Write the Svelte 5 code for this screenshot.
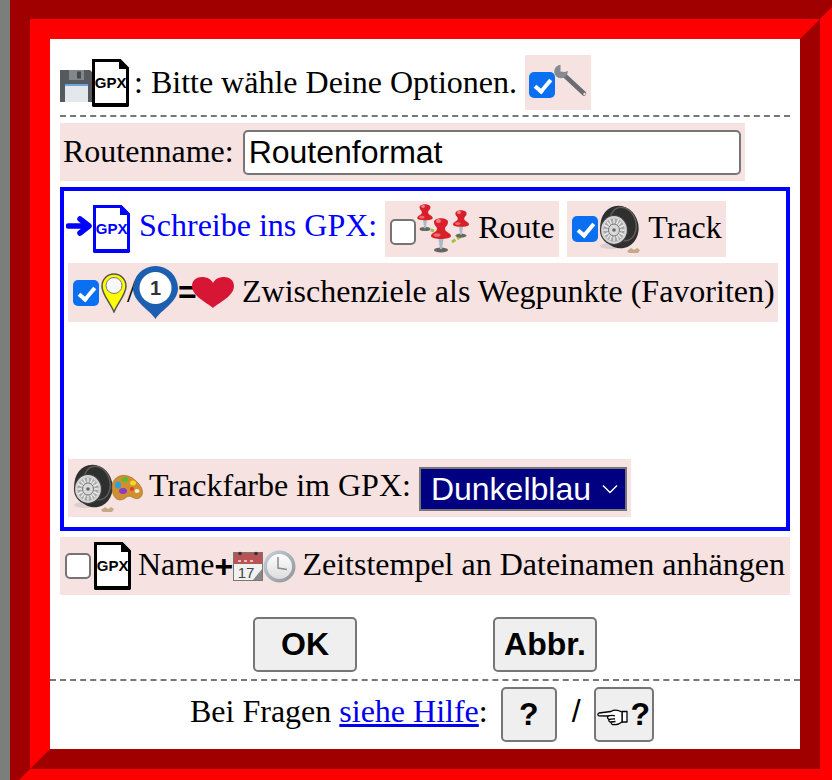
<script>
  const colours = ['Schwarz', 'Dunkelblau', 'Rot', 'Grün'];
  let routeName = $state('Routenformat');
  let wantRoute = $state(false);
  let wantTrack = $state(true);
  let wantWaypoints = $state(true);
  let expert = $state(true);
  let addStamp = $state(false);
  let trackColour = $state('Dunkelblau');
</script>

{#snippet gpxDoc(colour)}
  <svg class="doc" width="37" height="48" viewBox="0 0 37 48">
    <path d="M1.5 1.5H28L35.5 9V46H1.5Z" fill="#fff" stroke={colour} stroke-width="3" />
    <path d="M1 44H36V48H1Z" fill={colour} />
    <path d="M27 1 36 10H27Z" fill={colour} />
    <text x="18.7" y="29" text-anchor="middle" class="doc-text" fill={colour}>GPX</text>
  </svg>
{/snippet}

{#snippet wheel()}
  <svg class="wheel" width="42" height="48" viewBox="0 0 42 48">
    <ellipse cx="13" cy="41" rx="11" ry="3" fill="#bbb" opacity="0.5" />
    <ellipse cx="21.500" cy="22" rx="19" ry="21.500" transform="rotate(-14 21.500 22)" fill="#2f2f2f" />
    <ellipse cx="25" cy="19" rx="13" ry="17" transform="rotate(-14 25 19)" fill="none" stroke="#5d5d5d" stroke-width="1.500" />
    <ellipse cx="16" cy="25" rx="13.500" ry="14.500" fill="#d4d4d4" stroke="#3d3d3d" stroke-width="1.200" />
    <ellipse cx="16" cy="25" rx="10.500" ry="11.500" fill="#a8a8a8" />
    <g stroke="#ececec" stroke-width="1.400">
      <path d="M16 14V36M5.500 25H26.500M9 17 23 33M23 17 9 33M11.500 14.500 20.500 35.500M20.500 14.500 11.500 35.500M6 20 26 30M26 20 6 30" />
    </g>
    <ellipse cx="16" cy="25" rx="5.500" ry="6" fill="#d9d9d9" stroke="#777" />
    <circle cx="16" cy="25" r="1.800" fill="#666" />
    <path d="M29 46 33 43 36 45 39 43 42 45 40 48H31Z" fill="#b0935f" opacity="0.7" />
  </svg>
{/snippet}

{#snippet pin(x, y, s)}
  <g transform="translate({x} {y}) scale({s})">
    <ellipse cx="0" cy="32" rx="7" ry="2.600" fill="#666" />
    <path d="M-2.500 21h5l-1.500 10h-2z" fill="#a9bcc6" />
    <path d="M-7 4C-7-1 7-1 7 4 7 8 4 8 4 11 4 14 10 15 10 18 10 22-10 22-10 18-10 15-4 14-4 11-4 8-7 8-7 4Z" fill="#d8202c" />
    <ellipse cx="-2.500" cy="3" rx="2.500" ry="2" fill="#f27d7d" />
    <ellipse cx="-4" cy="17" rx="3.500" ry="1.800" fill="#ef6a6a" />
  </g>
{/snippet}

<div class="screen">
  <div class="dialog">
    <div class="dialog-inner">
      <div class="head">
        <svg class="floppy" width="32" height="32" viewBox="0 0 32 32">
          <path d="M0 0H30L32 2V32H0Z" fill="#555a5e" />
          <rect x="9" y="0" width="15" height="10" fill="#83878a" />
          <rect x="17" y="1.500" width="4" height="7" fill="#45494c" />
          <rect x="5" y="14" width="23" height="18" fill="#e3e8ec" />
          <rect x="5" y="14" width="23" height="2" fill="#6da4dc" />
        </svg>
        {@render gpxDoc('#000')}
        <span class="label colon">: Bitte wähle Deine Optionen.</span>
        <label class="chip expert">
          <input type="checkbox" bind:checked={expert} />
          <svg width="36" height="36" viewBox="0 0 36 36">
            <path d="M9 11 30 30.500" stroke="#696d71" stroke-width="4.500" stroke-linecap="round" />
            <circle cx="7" cy="8.500" r="6.800" fill="#858a8e" />
            <path d="M6.500 8.500 6.500 0 16 0 16 7 11 9Z" fill="#f7e2e2" />
            <circle cx="30.500" cy="31" r="1.200" fill="#f7e2e2" />
          </svg>
        </label>
      </div>
      <div class="rule"></div>

      <div class="chip name-row">
        <label class="label" for="route-name">Routenname:</label>
        <input id="route-name" class="name-input" bind:value={routeName} />
      </div>

      <div class="write-box">
        <div class="line">
          <svg class="arrow" width="27" height="22" viewBox="0 0 27 22">
            <path d="M2.500 11H21M14 4 23 11 14 18" fill="none" stroke="#00f" stroke-width="5.500" stroke-linecap="round" stroke-linejoin="round" />
          </svg>
          {@render gpxDoc('#00f')}
          <span class="label blue">Schreibe ins GPX:</span>
          <label class="chip route">
            <input type="checkbox" bind:checked={wantRoute} />
            <svg class="pins" width="56" height="50" viewBox="0 0 56 50">
              <path d="M9 24 18 27M36 38 47 31" stroke="#9bc43a" stroke-width="3" stroke-dasharray="4 2" />
              {@render pin(9, 0, 0.78)}
              {@render pin(45, 6, 0.8)}
              {@render pin(25, 14, 1)}
            </svg>
            <span class="label word">Route</span>
          </label>
          <label class="chip track">
            <input type="checkbox" bind:checked={wantTrack} />
            {@render wheel()}
            <span class="label word">Track</span>
          </label>
        </div>

        <label class="chip waypoints">
          <input type="checkbox" bind:checked={wantWaypoints} />
          <svg class="yellow-pin" width="26" height="40" viewBox="0 0 26 40">
            <path d="M13 39C9 29 1 22 1 13A12 12 0 0 1 25 13C25 22 17 29 13 39Z" fill="#ff0" stroke="#555" stroke-width="1.500" />
            <circle cx="13" cy="12.500" r="8" fill="#f7f7f7" stroke="#777" />
          </svg>
          <span class="label slash">/</span>
          <svg width="45" height="53" viewBox="0 0 45 53">
            <path d="M22.500 53C17 44 0 36 0 22.500A22.500 22.500 0 0 1 45 22.500C45 36 28 44 22.500 53Z" fill="#1c5fb0" />
            <circle cx="22.500" cy="22" r="16" fill="#fff" />
            <text x="22.500" y="29" text-anchor="middle" class="pin-text">1</text>
          </svg>
          <span class="sign">=</span>
          <svg width="42" height="32" viewBox="0 0 42 32">
            <path d="M21 31C14 25 0 19 0 9 0 3 5 0 10 0 15 0 19 2 21 6 23 2 27 0 32 0 37 0 42 3 42 9 42 19 28 25 21 31Z" fill="#d71635" />
          </svg>
          <span class="label word">Zwischenziele als Wegpunkte (Favoriten)</span>
        </label>

        <div class="chip colour-row">
          {@render wheel()}
          <svg class="palette" width="32" height="28" viewBox="0 0 32 28">
            <path d="M2 8C6 0 16-1 24 6 30 11 33 17 31 21 29 26 24 25 21 23 17 21 15 24 13 25 9 27 5 26 3 22 1 18 0 13 2 8Z" fill="#d0902f" stroke="#8e5f1e" stroke-width="0.500" />
            <ellipse cx="7" cy="11" rx="3" ry="3.500" fill="#2c9fe0" />
            <ellipse cx="14" cy="5.500" rx="3" ry="2.500" fill="#4fbf3a" />
            <ellipse cx="22" cy="9" rx="3" ry="2.500" fill="#f0d92a" />
            <ellipse cx="12" cy="17" rx="4" ry="3" fill="#8a3bc8" />
            <ellipse cx="26" cy="17" rx="2.500" ry="2" fill="#f6e9d6" />
            <ellipse cx="21" cy="15" rx="2" ry="2" fill="#e23b3b" />
          </svg>
          <label class="label word" for="track-colour">Trackfarbe im GPX:</label>
          <select id="track-colour" class="colour-select" bind:value={trackColour}>
            {#each colours as c}
              <option value={c}>{c}</option>
            {/each}
          </select>
        </div>
      </div>

      <label class="chip stamp">
        <input type="checkbox" bind:checked={addStamp} />
        {@render gpxDoc('#000')}
        <span class="label word">Name</span>
        <span class="sign">+</span>
        <svg width="30" height="30" viewBox="0 0 30 30">
          <rect x="0.500" y="1.500" width="29" height="28" fill="#f1f1f1" stroke="#777" />
          <rect x="1" y="2" width="28" height="11" fill="#b95454" />
          <circle cx="7" cy="2.500" r="1.800" fill="#333" />
          <circle cx="23" cy="2.500" r="1.800" fill="#333" />
          <path d="M5 10h3M11 10h3M17 10h3" stroke="#e8bcbc" stroke-width="2" />
          <text x="13" y="27" text-anchor="middle" class="cal-text">17</text>
          <path d="M29 18 20 29H29Z" fill="#888" />
        </svg>
        <svg width="33" height="33" viewBox="0 0 33 33">
          <defs>
            <linearGradient id="clock" x1="0" y1="0" x2="1" y2="1">
              <stop offset="0" stop-color="#c6d3de" />
              <stop offset="1" stop-color="#8f9296" />
            </linearGradient>
            <linearGradient id="clock-face" x1="0" y1="0" x2="0" y2="1">
              <stop offset="0" stop-color="#fff" />
              <stop offset="1" stop-color="#dcdcdc" />
            </linearGradient>
          </defs>
          <circle cx="16.500" cy="16.500" r="16" fill="url(#clock)" />
          <circle cx="16.500" cy="16.500" r="12.500" fill="url(#clock-face)" />
          <path d="M15 7V18L24 19.500" fill="none" stroke="#8a8a8a" stroke-width="1.500" />
        </svg>
        <span class="label word">Zeitstempel an Dateinamen anhängen</span>
      </label>

      <div class="actions">
        <button class="btn wide">OK</button>
        <button class="btn wide">Abbr.</button>
      </div>
      <div class="rule full"></div>

      <div class="help">
        <span class="label help-text">Bei Fragen <a href="#hilfe">siehe Hilfe</a>:</span>
        <button class="btn small">?</button>
        <span class="help-slash">/</span>
        <button class="btn small hand">
          <svg class="hand-icon" width="31" height="17" viewBox="0 0 31 17">
            <g fill="#fff" stroke="#000" stroke-width="1.300" stroke-linejoin="round">
              <path d="M25 2.500H30V13H25Z" />
              <path d="M25 3C21 1 17 0.500 14 2.500L2 4C0.500 4.500 0.500 6.500 2 6.800L11 7C10 9 11 10 12 10.500 11.500 12 12.500 13 14 13 14 15 15.500 16 17.500 15.500 20 16 23 14.500 25 13Z" />
              <path d="M11 7C13 6.500 16 6 18 7M12 10.500C14 10 16 9.500 18 10M14 13C15.500 13 17 12.500 18.500 12.500" fill="none" />
            </g>
          </svg>?
        </button>
      </div>
    </div>
  </div>
</div>

<style>
  :global(body) {
    background: #7b7f7a;
  }

  .screen {
    width: 832px;
    height: 780px;
    overflow: hidden;
    padding-left: 10px;
    box-sizing: border-box;
    background: #7b7f7a;
    display: flow-root;
  }

  .dialog {
    width: 830px;
    height: 790px;
    margin-top: -1px;
    box-sizing: border-box;
    border: 20px solid;
    border-color: #a00000 #ff0000 #ff0000 #a00000;
  }

  .dialog-inner {
    height: 100%;
    box-sizing: border-box;
    border: 20px solid;
    border-color: #ff0000 #a00000 #a00000 #ff0000;
    background: #fff;
    padding-top: 16px;
    font-family: 'Liberation Serif', serif;
    color: #000;
  }

  .label {
    font-size: 32px;
    line-height: 37px;
    margin-bottom: 3px;
    white-space: nowrap;
    font-family: 'Liberation Serif', serif;
  }

  .chip {
    background: #f7e2e2;
    display: flex;
    align-items: center;
  }

  .doc-text {
    font: bold 15px 'Liberation Sans', sans-serif;
  }

  .pin-text {
    font: bold 20px 'Liberation Sans', sans-serif;
    fill: #333;
  }

  .cal-text {
    font: 15px 'Liberation Sans', sans-serif;
    fill: #444;
  }

  input[type='checkbox'] {
    appearance: none;
    width: 26px;
    height: 26px;
    margin: 0;
    flex: none;
    box-sizing: border-box;
    border: 2px solid #757575;
    border-radius: 5px;
    background: #fff;
    position: relative;
  }

  input[type='checkbox']:checked {
    border: none;
    background: #0b6ff2;
  }

  input[type='checkbox']:checked::after {
    content: '';
    position: absolute;
    left: 9px;
    top: 4px;
    width: 6px;
    height: 13px;
    border: solid #fff;
    border-width: 0 4px 4px 0;
    transform: rotate(40deg);
  }

  .head {
    display: flex;
    align-items: center;
    height: 55px;
    margin-left: 10px;
  }

  .floppy {
    margin-top: 6px;
  }

  .doc {
    flex: none;
  }

  .colon {
    margin-left: 5px;
    margin-bottom: 0;
  }

  .expert {
    height: 55px;
    margin-left: 8px;
    padding-left: 4px;
    width: 66px;
    box-sizing: border-box;
  }

  .expert input {
    margin-top: 5px;
  }

  .expert svg {
    margin-left: -1px;
    margin-top: -4px;
  }

  .rule {
    margin: 5px 10px 0;
    border-top: 2px dashed #777;
    height: 0;
  }

  .rule.full {
    margin: 7px 0 0;
  }

  .name-row {
    margin: 6px 0 0 10px;
    width: 685px;
    height: 58px;
    padding-left: 3px;
    box-sizing: border-box;
  }

  .name-row .label {
    margin-bottom: 2px;
  }

  .name-input {
    width: 498px;
    height: 45px;
    margin-left: 9px;
    box-sizing: border-box;
    border: 2px solid #767676;
    border-radius: 5px;
    padding: 0 4px;
    font: 32px 'Liberation Sans', sans-serif;
    color: #000;
    background: #fff;
    outline: none;
  }

  .write-box {
    margin: 6px 10px 0;
    height: 344px;
    box-sizing: border-box;
    border: 4px solid #00f;
    padding: 10px 4px 0;
  }

  .line {
    display: flex;
    align-items: center;
    height: 56px;
  }

  .arrow {
    margin-left: -2px;
    margin-bottom: 6px;
  }

  .blue {
    color: #00f;
    margin-left: 9px;
    margin-bottom: 8px;
  }

  .route {
    height: 56px;
    width: 174px;
    margin-left: 8px;
    padding-left: 5px;
    box-sizing: border-box;
  }

  .route input {
    margin-top: 6px;
  }

  .pins {
    overflow: visible;
  }

  .route .word {
    margin-left: 6px;
  }

  .track {
    height: 56px;
    width: 159px;
    margin-left: 8px;
    padding-left: 5px;
    box-sizing: border-box;
  }

  .track .word {
    margin-left: 8px;
  }

  .waypoints {
    height: 59px;
    margin-top: 6px;
    width: 710px;
    padding-left: 5px;
    box-sizing: border-box;
  }

  .yellow-pin {
    margin-left: 2px;
  }

  .slash {
    width: 6px;
  }

  .sign {
    font: bold 32px 'Liberation Sans', sans-serif;
    line-height: 37px;
    width: 14px;
    text-align: center;
  }

  .word {
    margin-left: 8px;
  }

  .colour-row {
    height: 58px;
    width: 563px;
    margin-top: 137px;
    padding-left: 4px;
    box-sizing: border-box;
  }

  .palette {
    margin-left: -3px;
  }

  .colour-row .word {
    margin-left: 6px;
    margin-bottom: 6px;
  }

  .colour-select {
    appearance: none;
    width: 208px;
    height: 44px;
    margin-left: 8px;
    margin-top: 2px;
    box-sizing: border-box;
    border: 2px solid #767676;
    border-radius: 0;
    background: #000080 url("data:image/svg+xml,%3Csvg xmlns='http://www.w3.org/2000/svg' width='16' height='10'%3E%3Cpath d='M1 1.500 8 8.500 15 1.500' fill='none' stroke='white' stroke-width='1.500'/%3E%3C/svg%3E") no-repeat right 7px center;
    color: #fff;
    padding: 0 0 0 10px;
    font: 32px 'Liberation Sans', sans-serif;
  }

  .stamp {
    height: 58px;
    margin: 6px 10px 0;
    padding-left: 5px;
  }

  .stamp .doc {
    margin-left: 3px;
  }

  .stamp .word {
    margin-left: 7px;
  }

  .stamp .sign {
    width: 19px;
  }

  .stamp .word:last-child {
    margin-left: 6px;
  }

  .actions {
    display: flex;
    justify-content: center;
    gap: 136px;
    margin-top: 22px;
  }

  .btn {
    box-sizing: border-box;
    border: 2px solid #767676;
    border-radius: 5px;
    background: #efefef;
    color: #000;
    padding: 0;
    font: bold 32px 'Liberation Sans', sans-serif;
  }

  .wide {
    width: 104px;
    height: 55px;
  }

  .help {
    display: flex;
    align-items: center;
    margin-top: 6px;
    padding-left: 140px;
    height: 55px;
  }

  .help-text {
    margin-bottom: 6px;
  }

  .small {
    width: 56px;
    height: 55px;
    margin-left: 13px;
  }

  .help-slash {
    font: 32px 'Liberation Sans', sans-serif;
    margin-left: 15px;
    margin-bottom: 6px;
    width: 22px;
  }

  .hand {
    width: 60px;
    margin-left: 0;
    display: flex;
    align-items: center;
    justify-content: center;
    gap: 2px;
  }

  .hand-icon {
    margin-top: 5px;
    flex: none;
  }
</style>
